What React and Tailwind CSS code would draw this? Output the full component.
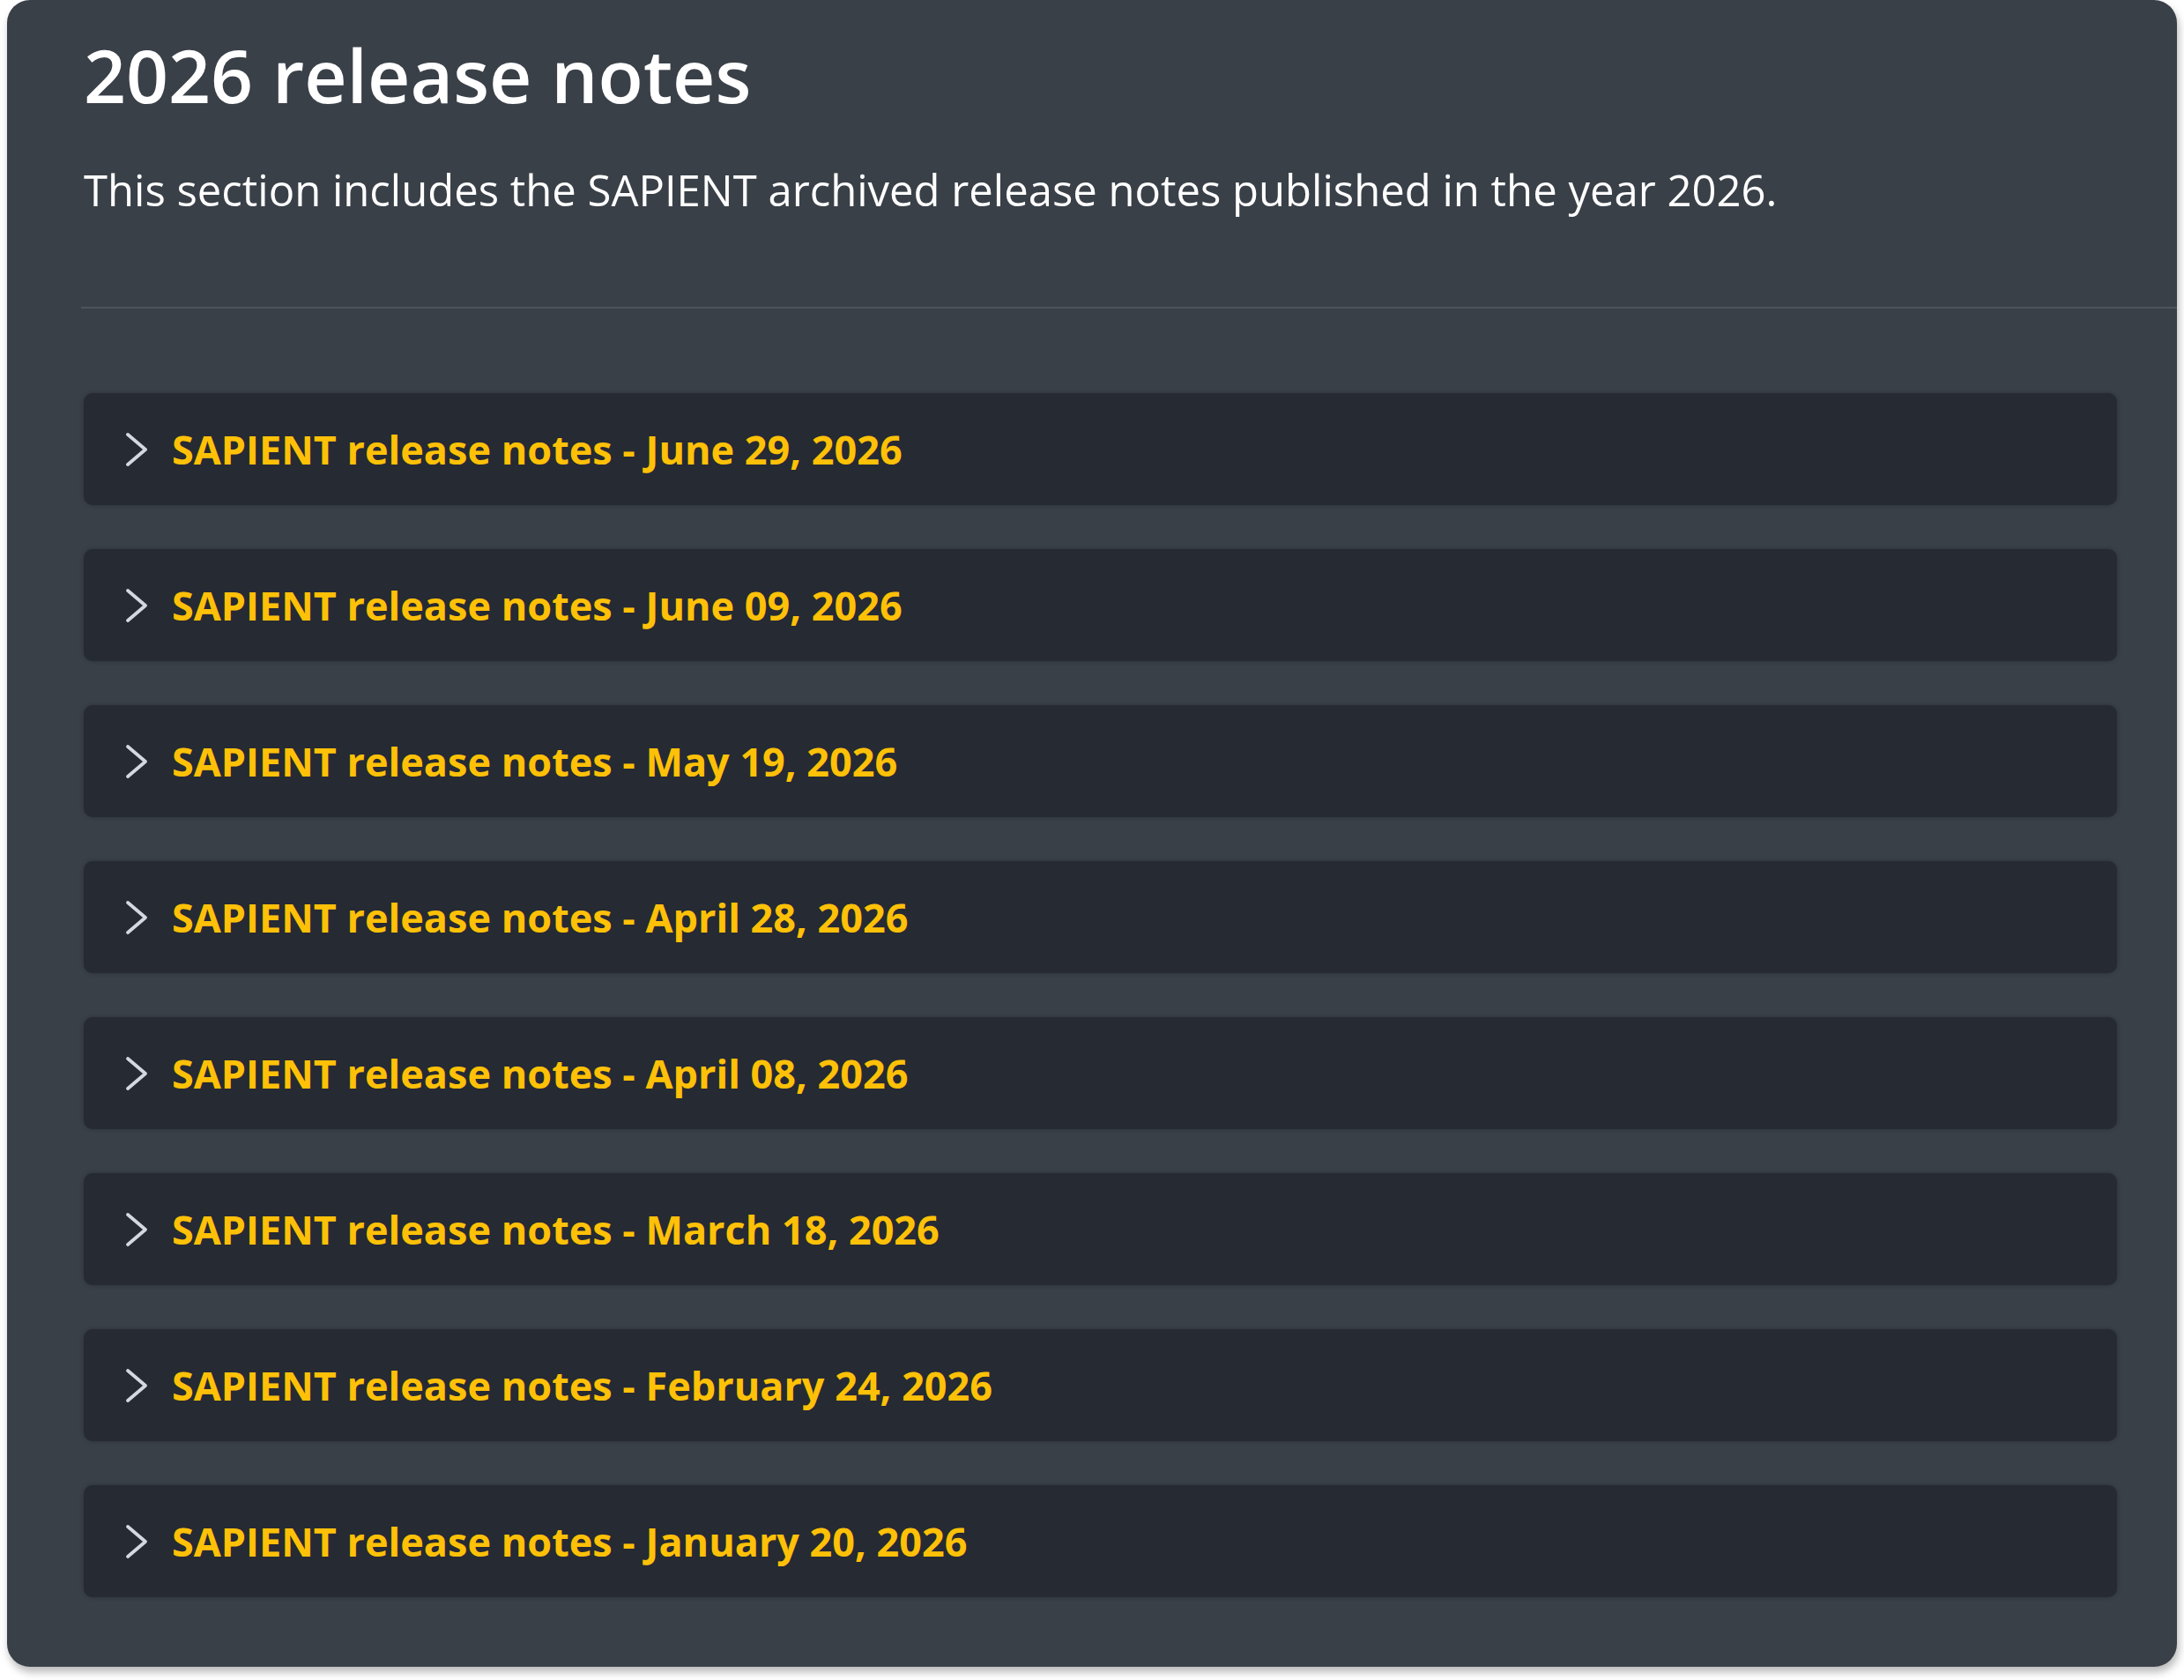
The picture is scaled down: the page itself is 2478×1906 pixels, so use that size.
import React from 'react'

const releases = [
  'June 29, 2026',
  'June 09, 2026',
  'May 19, 2026',
  'April 28, 2026',
  'April 08, 2026',
  'March 18, 2026',
  'February 24, 2026',
  'January 20, 2026',
]

function Chevron() {
  return (
    <svg width="28" height="40" viewBox="0 0 28 40" fill="none" className="shrink-0">
      <polyline points="4,3 24,20 4,37" stroke="#d3d9e0" strokeWidth="3.8" strokeLinecap="round" strokeLinejoin="round" />
    </svg>
  )
}

function ReleaseRow({ date }) {
  return (
    <button
      type="button"
      className="flex h-[127px] w-full items-center gap-[26px] rounded-[10px] bg-[#262a33] pl-[46px] text-left shadow-[0_0_5px_rgba(0,0,0,0.25)]"
    >
      <Chevron />
      <span className="text-[45px] font-bold text-[#ffc107]">
        SAPIENT release notes - {date}
      </span>
    </button>
  )
}

export default function App() {
  return (
    <div className="min-h-screen bg-white px-[8px]" style={{ fontFamily: '"Open Sans", "Noto Sans", sans-serif' }}>
      <div className="w-[2462px] rounded-[26px] bg-[#3a4048] pb-[79px] pl-[87px] shadow-[2px_6px_10px_rgba(0,0,0,0.28)]">
        <h1 className="pt-[35px] text-[84px] font-semibold leading-[1.2] text-white">2026 release notes</h1>
        <p className="mt-[43px] text-[49px] leading-[1.5] text-white">
          This section includes the SAPIENT archived release notes published in the year 2026.
        </p>
        <div className="-ml-[3px] mt-[96px] h-[2px] bg-[#4d545c]" />
        <div className="mt-[96px] flex flex-col gap-[50px] pr-[68px]">
          {releases.map(d => (
            <ReleaseRow key={d} date={d} />
          ))}
        </div>
      </div>
    </div>
  )
}
